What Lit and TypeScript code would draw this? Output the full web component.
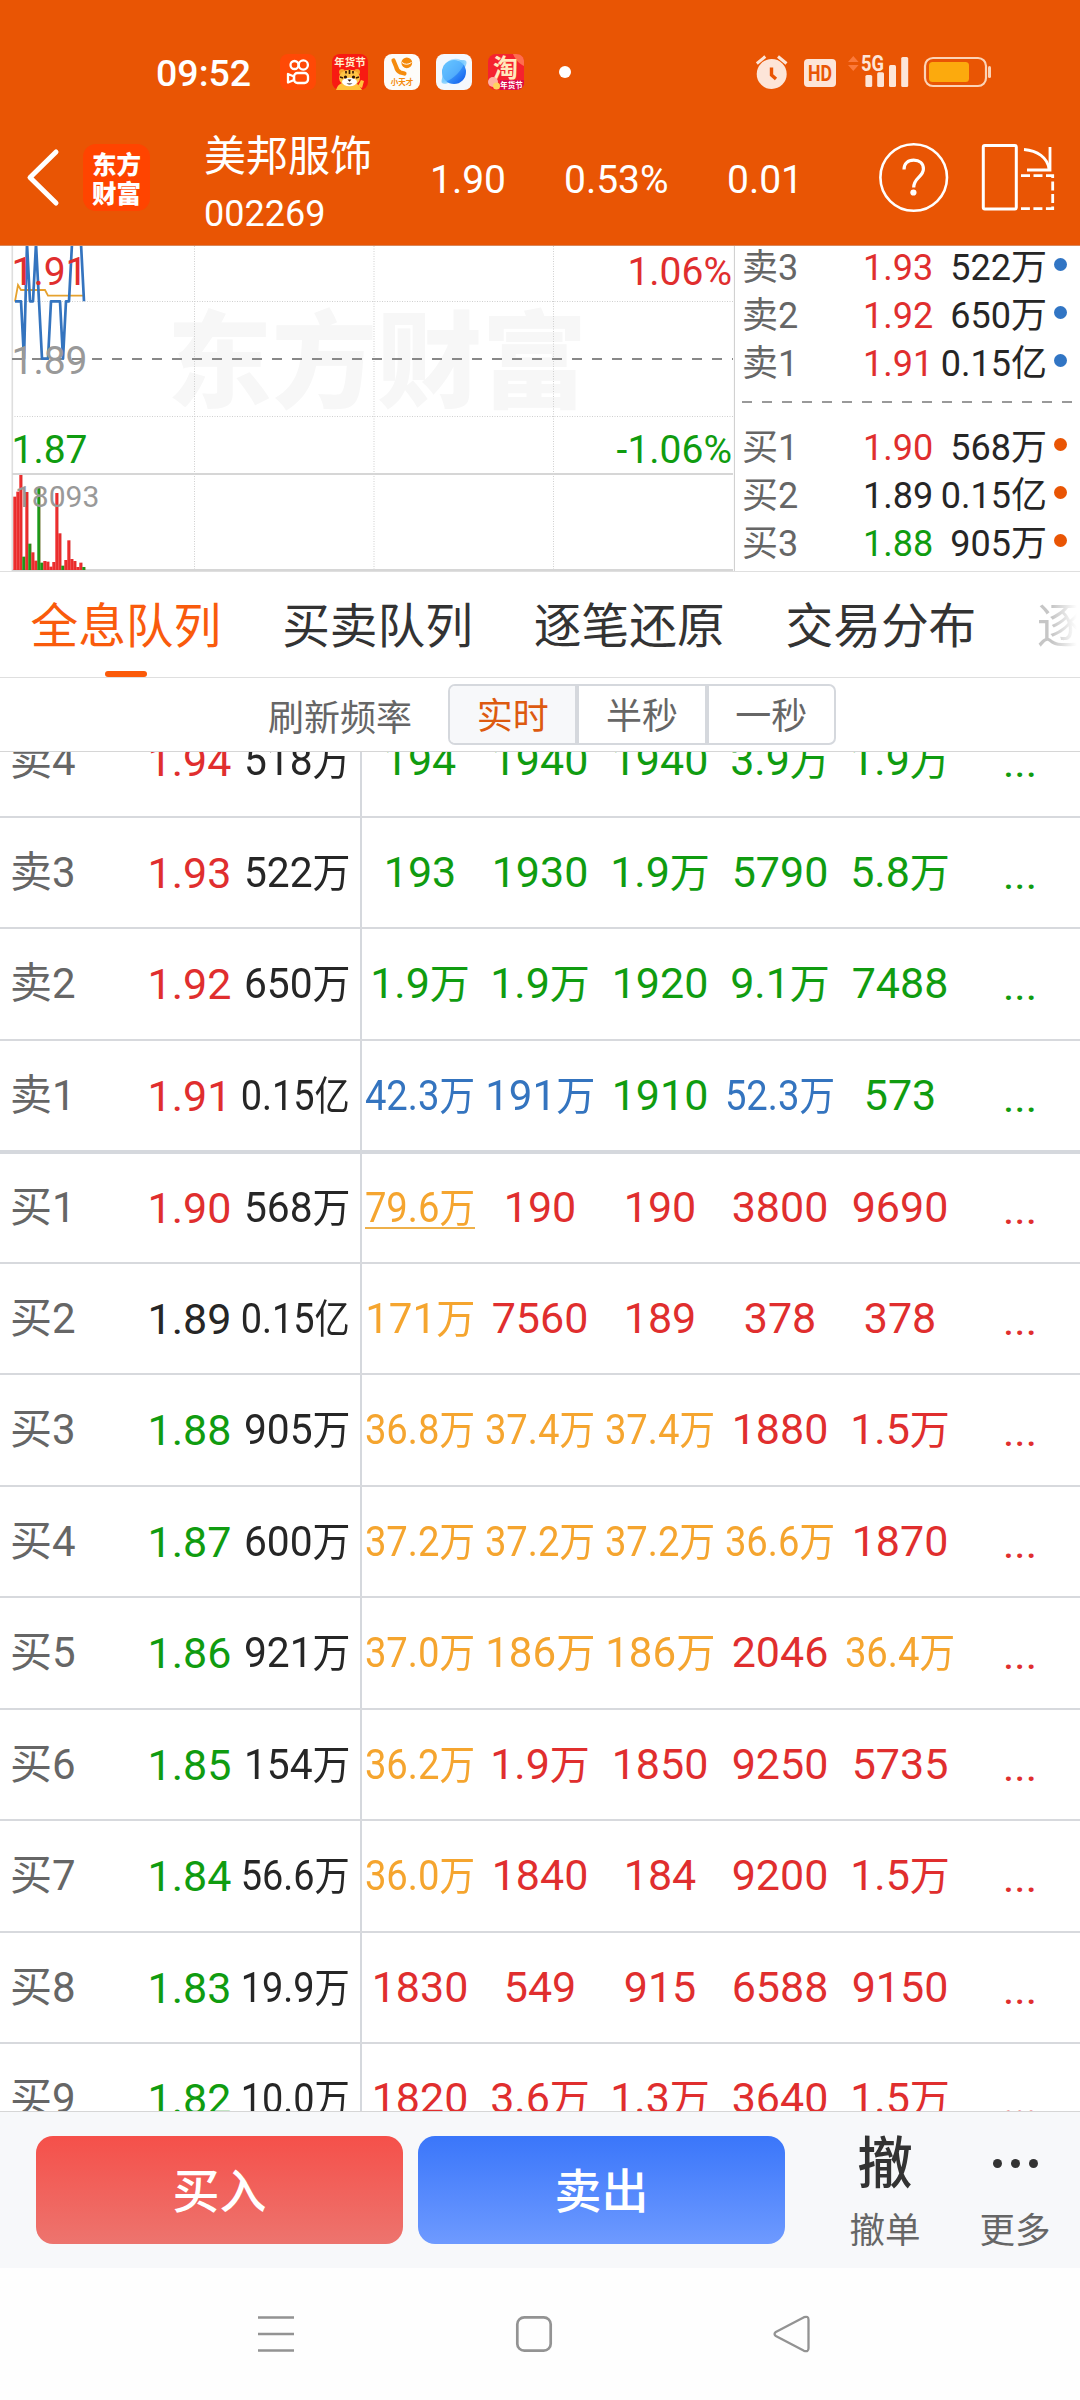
import { LitElement, html, css, svg, nothing } from "lit";
import { customElement, property } from "lit/decorators.js";
import { classMap } from "lit/directives/class-map.js";
import { styleMap } from "lit/directives/style-map.js";

type Tone = "red" | "green" | "blue" | "gold" | "ink";

interface Level {
  label: string;
  price: string;
  tone: Tone;
  qty: string;
  cells: [string, Tone][];
  rest: Tone;
  last?: boolean;
  first?: boolean;
}

const CODE: Record<string, Tone> = { r: "red", g: "green", b: "blue", y: "gold", k: "ink" };

/* Each cell is written as a tone letter followed by its figure. */
const level = (label: string, price: string, qty: string, cells: string, rest: string): Level => ({
  label,
  price: price.slice(1),
  tone: CODE[price[0]],
  qty,
  cells: cells.split(" ").map((c) => [c.slice(1), CODE[c[0]]] as [string, Tone]),
  rest: CODE[rest],
});

const LEVELS: Level[] = [
  level("卖4", "r1.94", "518万", "g194 g1940 g1940 g3.9万 g1.9万", "g"),
  level("卖3", "r1.93", "522万", "g193 g1930 g1.9万 g5790 g5.8万", "g"),
  level("卖2", "r1.92", "650万", "g1.9万 g1.9万 g1920 g9.1万 g7488", "g"),
  { ...level("卖1", "r1.91", "0.15亿", "b42.3万 b191万 g1910 b52.3万 g573", "g"), last: true },
  { ...level("买1", "r1.90", "568万", "y79.6万 r190 r190 r3800 r9690", "r"), first: true },
  level("买2", "k1.89", "0.15亿", "y171万 r7560 r189 r378 r378", "r"),
  level("买3", "g1.88", "905万", "y36.8万 y37.4万 y37.4万 r1880 r1.5万", "r"),
  level("买4", "g1.87", "600万", "y37.2万 y37.2万 y37.2万 y36.6万 r1870", "r"),
  level("买5", "g1.86", "921万", "y37.0万 y186万 y186万 r2046 y36.4万", "r"),
  level("买6", "g1.85", "154万", "y36.2万 r1.9万 r1850 r9250 r5735", "r"),
  level("买7", "g1.84", "56.6万", "y36.0万 r1840 r184 r9200 r1.5万", "r"),
  level("买8", "g1.83", "19.9万", "r1830 r549 r915 r6588 r9150", "r"),
  level("买9", "g1.82", "10.0万", "r1820 r3.6万 r1.3万 r3640 r1.5万", "r"),
];

const FONT = css`Roboto, "Noto Sans CJK SC", sans-serif`;

/* A figure that is squeezed horizontally when it is wider than its column. */
@customElement("fit-figure")
class FitFigure extends LitElement {
  @property() text = "";
  @property({ type: Number }) max = 110;
  @property() origin = "center";

  static styles = css`
    :host { display: flex; justify-content: center; white-space: nowrap; }
    :host(.qty) { justify-content: flex-end; }
    .t { flex: none; }
    .u { font-size: 0.93em; }
  `;

  render() {
    const digits = this.text.replace(/[万亿]/g, "");
    const unit = this.text.slice(digits.length);
    const dots = (digits.match(/\./g) ?? []).length;
    const size = 43;
    const width = (digits.length - dots) * 0.5617 * size + dots * 0.263 * size + unit.length * 0.93 * size;
    const scale = Math.min(1, this.max / width);
    return html`<span class="t" style=${styleMap({
      transform: scale < 1 ? `scaleX(${scale.toFixed(4)})` : "none",
      transformOrigin: this.origin,
    })}>${digits}${unit ? html`<span class="u">${unit}</span>` : nothing}</span>`;
  }
}

@customElement("status-bar")
class StatusBar extends LitElement {
  static styles = css`
    :host { display: flex; align-items: center; height: 98px; padding: 46px 88px 0 156px; box-sizing: border-box;
      color: #fff; font-family: ${FONT}; }
    .time { font-size: 37.5px; line-height: 52px; width: 124px; font-weight: 500; padding-top: 2px; }
    .apps { display: flex; gap: 16px; align-items: center; }
    svg { display: block; }
    .dot { width: 12px; height: 12px; border-radius: 50%; background: #fff; margin-left: 35px; }
    .sys { margin-left: auto; display: flex; align-items: center; }
    .cjk { font-family: "Noto Sans CJK SC", sans-serif; }
    .num { font-family: Roboto, sans-serif; }
  `;

  render() {
    return html`
      <span class="time">09:52</span>
      <div class="apps">
        <svg width="36" height="36" viewBox="0 0 36 36">
          <rect width="36" height="36" rx="8" fill="#ff4906" />
          <g fill="none" stroke="#fff" stroke-width="2.3">
            <circle cx="14.5" cy="11" r="4" /><circle cx="23.3" cy="11" r="4.6" />
            <rect x="14" y="19" width="14" height="10" rx="3.5" />
            <path d="M14 22.5 8 20v8.5l6-2.5z" stroke-linejoin="round" />
          </g>
        </svg>
        <svg width="36" height="36" viewBox="0 0 36 36">
          <rect width="36" height="36" rx="8" fill="#f81a12" />
          <text class="cjk" x="18" y="12" font-size="10.5" font-weight="700" text-anchor="middle" fill="#fff2cf">年货节</text>
          <path d="M4 36c2-7 7-8 13-8s10 2 13 8z" fill="#ffc33b" />
          <circle cx="10" cy="18" r="3" fill="#f6a72a" /><circle cx="25" cy="18" r="3" fill="#f6a72a" />
          <ellipse cx="17.5" cy="24" rx="10.5" ry="8.3" fill="#ffc544" />
          <ellipse cx="17.5" cy="28" rx="7.5" ry="4.2" fill="#fff" />
          <path d="M17.500 16v4M14 17v2.500M21 17v2.500M8 23l3 1M27 23l-3 1" stroke="#3d1c06" stroke-width="1.700" />
          <circle cx="13.500" cy="23" r="1.600" fill="#2b1205" /><circle cx="21.500" cy="23" r="1.600" fill="#2b1205" />
          <path d="M15.500 25.500h4l-2 2.200zM14.500 29.500q3 2 6 0" fill="#2b1205" />
          <path d="M26 32l3-6 3 1-2 7z" fill="#ffc33b" />
        </svg>
        <svg width="36" height="36" viewBox="0 0 36 36">
          <rect width="36" height="36" rx="8" fill="#fdfcf9" />
          <path d="M9.500 6.500l2.500 6q1 4.500 4.500 6l4 1" fill="none" stroke="#f58b0c" stroke-width="4.200" stroke-linecap="round" stroke-linejoin="round" />
          <circle cx="22.800" cy="8.800" r="5.400" fill="#f58b0c" />
          <path d="M18 8.500q4.500 3.500 9.500 0" stroke="#fff" fill="none" />
          <text class="cjk" x="18" y="31" font-size="7.500" font-weight="700" text-anchor="middle" fill="#f58b0c">小天才</text>
        </svg>
        <svg width="36" height="36" viewBox="0 0 36 36">
          <defs><linearGradient id="orb" x1="0" y1="0" x2="1" y2="1">
            <stop offset="0" stop-color="#67c9ff" /><stop offset=".5" stop-color="#3a97fb" /><stop offset="1" stop-color="#0b55ea" />
          </linearGradient></defs>
          <rect width="36" height="36" rx="8" fill="#f4f8fd" />
          <path d="M6 29C4 27 8 18 14 12S28 5 30 7s-2 10-8 16S8 31 6 29z" fill="#8fd3ff" />
          <circle cx="18" cy="18" r="12" fill="url(#orb)" />
          <path d="M6.500 28c7 0 18-9 22-19-3-4-10-6-16-2-7 5-7 13-6 21z" fill="#6cc6ff" opacity=".55" />
        </svg>
        <svg width="36" height="36" viewBox="0 0 36 36">
          <rect width="36" height="36" rx="8" fill="#f5222f" />
          <path d="M25 0h3c5 0 8 3 8 8v4c-4-2-8-5-11-12z" fill="#ff6d4f" />
          <text class="cjk" x="17.500" y="22.500" font-size="25" font-weight="700" text-anchor="middle" fill="#ffe9bd">淘</text>
          <circle cx="5" cy="28" r="5" fill="#ffb2a2" />
          <path d="M12 26h24v2c0 5-3 8-8 8H12z" fill="#dc0b4a" />
          <circle cx="8.500" cy="32" r="3.500" fill="#ffd45e" />
          <text class="cjk" x="23.500" y="34" font-size="7.500" font-weight="700" text-anchor="middle" fill="#fff">年货节</text>
        </svg>
      </div>
      <span class="dot"></span>
      <div class="sys">
        <svg width="236" height="40" viewBox="756 52 236 40" fill="#fde5d8">
          <circle cx="771.700" cy="74" r="15" />
          <path d="M756.800 63.500l8.500-7M786.500 63.500l-8.500-7" stroke="#fde5d8" stroke-width="3" />
          <path d="M771.500 67.500v7.500l4.500 4" stroke="#e95504" stroke-width="3.400" fill="none" />
          <rect x="804" y="59" width="32" height="28" rx="4" />
          <text class="num" x="820" y="81" font-size="22.500" font-weight="700" text-anchor="middle" fill="#e95504" textLength="24" lengthAdjust="spacingAndGlyphs">HD</text>
          <path d="M848 62l5.300-6 5.300 6zM848 65l5.300 6 5.300-6z" fill="#fb7a3c" />
          <text class="num" x="861" y="70.500" font-size="21.500" font-weight="700" textLength="23" lengthAdjust="spacingAndGlyphs">5G</text>
          <rect x="865.400" y="75" width="6.800" height="12" rx="1.500" />
          <rect x="877.200" y="72.300" width="6.800" height="14.700" rx="1.500" />
          <rect x="889" y="65" width="7" height="22" rx="1.500" />
          <rect x="901.200" y="57" width="7" height="30" rx="1.500" />
          <rect x="925" y="58" width="61" height="28" rx="8" fill="none" stroke="#fcd3b6" stroke-width="2.200" />
          <rect x="929" y="62" width="40" height="20" rx="3.500" fill="#fcaa0d" />
          <rect x="988" y="66" width="3" height="12" rx="1.500" fill="#fcd3b6" />
        </svg>
      </div>`;
  }
}

@customElement("stock-header")
class StockHeader extends LitElement {
  static styles = css`
    :host { display: flex; align-items: flex-start; height: 147px; padding: 32px 24px 0 24px; box-sizing: border-box;
      color: #fff; font-family: ${FONT}; }
    svg { display: block; flex: none; }
    .back { margin-top: 17px; }
    .logo { flex: none; margin: 14px 0 0 23px; width: 67px; height: 67px; border-radius: 13px; background: #ff4400;
      display: flex; flex-direction: column; align-items: center; justify-content: center;
      font: 900 24.5px/29px "Noto Sans CJK SC", sans-serif; }
    .id { margin-left: 54px; width: 226px; display: flex; flex-direction: column; }
    .name { font-size: 42px; line-height: 53px; }
    .code { font-size: 36px; line-height: 48px; margin-top: 7px; }
    .n { font-size: 39px; line-height: 46px; margin-top: 27px; white-space: nowrap; }
    .n1 { width: 134px; }
    .n2 { width: 163px; }
    .icons { margin-left: auto; display: flex; padding-top: 12px; }
  `;

  render() {
    return html`
      <svg class="back" width="36" height="60" viewBox="0 0 36 60"><path d="M32 5 6 30.500 32 56" fill="none" stroke="#fff" stroke-width="5" stroke-linecap="round" stroke-linejoin="round" /></svg>
      <div class="logo"><span>东方</span><span>财富</span></div>
      <div class="id"><span class="name">美邦服饰</span><span class="code">002269</span></div>
      <span class="n n1">1.90</span><span class="n n2">0.53%</span><span class="n">0.01</span>
      <div class="icons">
        <svg width="178" height="72" viewBox="878 142 178 72" fill="none" stroke="#fff">
          <circle cx="913.700" cy="177.500" r="33.300" stroke-width="2.600" />
          <path d="M904 169.500c0-6 4-9.300 9.700-9.300s9.700 3.300 9.700 8.800c0 8-9.700 8.500-9.700 18.500" stroke-width="3.200" />
          <circle cx="913.400" cy="192.500" r="3.100" fill="#fff" stroke="none" />
          <rect x="983.300" y="145.500" width="33" height="63.500" rx="1.500" stroke-width="3" />
          <path d="M1024 149.500c13 1 24 8 25 20" stroke-width="2.800" />
          <path d="M1050 147v23h-23" stroke-width="2.800" />
          <path d="M1021 175.600h31.700v33H1021" stroke-width="2.800" stroke-dasharray="9 3.500" />
        </svg>
      </div>`;
  }
}

@customElement("trend-chart")
class TrendChart extends LitElement {
  static styles = css`
    :host { display: block; font-family: ${FONT}; }
    svg { display: block; }
    .wm { font-family: "Noto Sans CJK SC", sans-serif; font-weight: 900; font-size: 105px; fill: #f7f7f7; }
    .v { font-size: 39px; }
    .s { font-size: 30px; fill: #999; }
  `;

  private prices = [184, 184, 184, 356, 11, 184, 184, 11, 184, 356, 356, 356, 184, 184, 184, 184, 356, 184, 184, 11, 11, 11, 11, 184];
  private volumes = "r770 r755 r705 g950 r756 g911 r937 r962 g743 g968 r963 r965 r980 r966 r759 r880 g977 r960 r901 r957 r963 r981 r968 g981".split(" ");

  render() {
    const y = (v: number) => 240 + v / 3;
    const line = this.prices.map((p, i) => `${15 + i * 3},${y(p).toFixed(1)}`).join(" ");
    return html`<svg width="735" height="325" viewBox="0 246 735 325">
      <text class="wm" x="167" y="399">东方财富</text>
      <g stroke="#cfcfcf" stroke-width="1" stroke-dasharray="1 1.500">
        <path d="M12 301.500H733M12 416.500H733M194.500 246V570M374 246V570M553.500 246V570" fill="none" />
      </g>
      <path d="M12.300 246V571" stroke="#dedede" stroke-width="1.600" />
      <path d="M12 474H733M12 570H733" stroke="#d6d6d6" stroke-width="2" />
      <path d="M734.400 246V571" stroke="#cccccc" stroke-width="1" />
      <path d="M12 359H733" stroke="#888" stroke-width="2" stroke-dasharray="10 10" />
      <polyline points="15,301.300 18,285 21,290 45,290 48,295.700 84,295.700" fill="none" stroke="#e6a22e" stroke-width="1.800" />
      <polyline points=${line} fill="none" stroke="#3474bf" stroke-width="2.700" stroke-linejoin="round" />
      ${this.volumes.map((v, i) => {
        const top = y(Number(v.slice(1)));
        return svg`<rect x=${13.3 + i * 3} y=${top} width="3" height=${570 - top} fill=${v[0] === "r" ? "#ee2f2f" : "#199c19"} />
          <path d=${`M${16.1 + i * 3} ${top}V570`} stroke="#b52222" stroke-opacity=".55" stroke-width=".6" />`;
      })}
      <text class="v" x="11.500" y="285" fill="#e02e2e">1.91</text>
      <text class="v" x="11.500" y="374" fill="#999">1.89</text>
      <text class="v" x="11.500" y="462.700" fill="#109c10">1.87</text>
      <text class="s" x="15" y="506.700">18093</text>
      <text class="v" x="732" y="285" text-anchor="end" fill="#e02e2e">1.06%</text>
      <text class="v" x="732" y="462.700" text-anchor="end" fill="#109c10">-1.06%</text>
    </svg>`;
  }
}

@customElement("mini-book")
class MiniBook extends LitElement {
  static styles = css`
    :host { display: flex; flex-direction: column; flex: 1; font-family: ${FONT}; font-size: 36px; color: #262626; }
    .row { display: grid; grid-template-columns: 121px 1fr 7px 13px; align-items: center; height: 48px; line-height: 48px;
      padding: 0 13px 0 7px; white-space: nowrap; }
    .label { color: #666; }
    .pq { display: flex; justify-content: space-between; }
    .dot { width: 13px; height: 13px; border-radius: 50%; grid-column: 4; margin-top: -7px; }
    .asks .dot { background: #3175c4; }
    .bids .dot { background: #e95504; }
    .asks { margin-top: -2px; }
    .bids { margin-top: 21px; }
    svg { display: block; flex: none; margin: 13px 0 0 7px; }
    .red { color: #e02e2e; } .green { color: #109c10; }
  `;

  render() {
    const row = ([label, price, tone, qty]: string[]) => html`<div class="row">
      <span class="label">${label}</span>
      <span class="pq"><span class=${tone}>${price}</span><span>${qty}</span></span>
      <span class="dot"></span></div>`;
    return html`
      <div class="asks">${[["卖3", "1.93", "red", "522万"], ["卖2", "1.92", "red", "650万"], ["卖1", "1.91", "red", "0.15亿"]].map(row)}</div>
      <svg width="338" height="2" viewBox="0 0 338 2"><path d="M0 1H331" stroke="#999" stroke-width="2" stroke-dasharray="10 10" /></svg>
      <div class="bids">${[["买1", "1.90", "red", "568万"], ["买2", "1.89", "ink", "0.15亿"], ["买3", "1.88", "green", "905万"]].map(row)}</div>`;
  }
}

@customElement("order-row")
class OrderRow extends LitElement {
  @property({ attribute: false }) level!: Level;

  static styles = css`
    :host { display: block; }
    .row { display: flex; height: 109.5px; border-bottom: 2px solid #d7d9dd; font: 43px/108px ${FONT}; color: #262626; white-space: nowrap; }
    .last { border-bottom: 4px solid #d5d8dd; }
    .first { height: 107.5px; line-height: 106px; }
    .left { display: grid; grid-template-columns: 137.5px 84px minmax(0, 1fr); width: 362px; flex: none; box-sizing: border-box;
      padding: 0 10px 0 10px; border-right: 2px solid #d5d8dd; margin-right: -2px; }
    .label { color: #666; font-size: 42px; padding-top: 1px; }
    .price { padding-top: 1px; }
    .cell { width: 120px; text-align: center; position: relative; }
    .rest { padding-top: 2px; box-sizing: border-box; }
    .mark::after { content: ""; position: absolute; left: 5px; right: 5px; top: 73px; height: 2px; background: #eeb04a; }
    .red { color: #e02e2e; } .green { color: #109c10; } .blue { color: #3474bf; } .gold { color: #f5a52f; }
  `;

  render() {
    const l = this.level;
    return html`<div class=${classMap({ row: true, last: !!l.last, first: !!l.first })}>
      <div class="left">
        <span class="label">${l.label}</span><span class=${classMap({ price: true, [l.tone]: true })}>${l.price}</span>
        <fit-figure class="qty" .text=${l.qty} .max=${l.qty.length > 4 ? 109 : 106.5} .origin=${"right"}></fit-figure>
      </div>
      ${l.cells.map(([t, tone], i) => html`<div class=${classMap({ cell: true, [tone]: true, mark: !!l.first && i === 0 })}>
        <fit-figure .text=${t} .max=${110}></fit-figure></div>`)}
      <div class=${classMap({ cell: true, rest: true, [l.rest]: true })}>...</div>
    </div>`;
  }
}

@customElement("app-root")
class AppRoot extends LitElement {
  static styles = css`
    :host { display: block; width: 1080px; height: 2400px; overflow: hidden; background: #fff; font-family: ${FONT}; color: #262626; }
    .page { display: flex; flex-direction: column; height: 2400px; }
    .top { background: #e95504; height: 245px; border-bottom: 1px solid #d9875a; flex: none; }
    .quote { display: flex; height: 325px; border-bottom: 1px solid #dfdfdf; flex: none; }
    .tabs { display: flex; flex: none; height: 105px; border-bottom: 1px solid #dfdfdf; padding-left: 30px; gap: 60px; overflow: hidden;
      font-size: 47.700px; line-height: 111px; color: #333; white-space: nowrap; }
    .tab { flex: none; display: flex; flex-direction: column; align-items: center; width: 191.700px; height: 105px; }
    .tab.on { color: #f95b0c; }
    .tab.on::after { content: ""; width: 42px; height: 6px; border-radius: 3px; background: #fb5a09; margin-top: -12px; flex: none; }
    .tab.fade { display: block; width: 48px; background: linear-gradient(90deg, #c6c6c6 0, #c6c6c6 15px, #fff 40px); -webkit-background-clip: text; background-clip: text; color: transparent; }
    .rate { display: flex; flex: none; align-items: center; height: 73px; padding-left: 268px; gap: 36px; border-bottom: 1px solid #d6d6d6; font-size: 36px; color: #666; }
    .seg { display: flex; box-sizing: border-box; width: 388px; height: 61px; border: 2px solid #d5d8dd; border-radius: 7px; overflow: hidden; line-height: 62px; }
    .opt { flex: 1; text-align: center; }
    .opt + .opt { border-left: 4px solid #d5d8dd; }
    .opt.on { background: #f7f8fa; color: #dd5a10; }
    .book { flex: none; height: 1359px; overflow: hidden; }
    .rows { margin-top: -46px; }
    .bar { flex: none; display: flex; height: 157px; box-sizing: border-box; border-top: 1px solid #d6d6d6; background: #f7f8fa; padding: 24px 0 0 36px; }
    .btn { width: 367px; height: 108px; border-radius: 17px; margin-right: 15px; color: #fff; font-size: 47px; font-weight: 500; line-height: 112px; text-align: center; }
    .buy { background: linear-gradient(#f5504a, #ed746e); }
    .sell { background: linear-gradient(#3a76fa, #6e9aff); }
    .act { width: 130px; display: flex; flex-direction: column; align-items: center; font-size: 35.5px; line-height: 46px; color: #666; }
    .act:nth-of-type(3) { margin-left: 20px; }
    .big { height: 72px; font-size: 55.500px; line-height: 57px; color: #333; font-weight: 500; }
    .dots { height: 72px; display: flex; gap: 9px; padding-top: 23px; box-sizing: border-box; }
    .dots i { width: 9px; height: 9px; border-radius: 50%; background: #333; }
    .nav { flex: 1; display: flex; align-items: center; gap: 220px; padding-left: 257px; background: #fefefe; }
    .nav svg { display: block; width: 38px; height: 38px; fill: none; stroke: #939393; stroke-width: 2.700; }
  `;

  render() {
    return html`<div class="page">
      <div class="top"><status-bar></status-bar><stock-header></stock-header></div>
      <div class="quote"><trend-chart></trend-chart><mini-book></mini-book></div>
      <div class="tabs">
        <span class="tab on">全息队列</span><span class="tab">买卖队列</span><span class="tab">逐笔还原</span><span class="tab">交易分布</span>
        <span class="tab fade">逐</span>
      </div>
      <div class="rate">
        <span>刷新频率</span>
        <div class="seg"><span class="opt on">实时</span><span class="opt">半秒</span><span class="opt">一秒</span></div>
      </div>
      <div class="book"><div class="rows">${LEVELS.map((l) => html`<order-row .level=${l}></order-row>`)}</div></div>
      <div class="bar">
        <div class="btn buy">买入</div><div class="btn sell">卖出</div>
        <div class="act"><span class="big">撤</span><span>撤单</span></div>
        <div class="act"><span class="dots"><i></i><i></i><i></i></span><span>更多</span></div>
      </div>
      <div class="nav">
        <svg viewBox="0 0 38 38"><path d="M1 2.500h36M1 19h36M1 35.500h36" /></svg>
        <svg viewBox="0 0 38 38"><rect x="2.300" y="2.300" width="33.400" height="33.400" rx="7" /></svg>
        <svg viewBox="0 0 38 38"><path d="M2.800 17 31 2.200q4.500-1.500 4.500 2.500v28.600q0 4-4.500 2.500L2.800 21q-2.500-2 0-4z" stroke-linejoin="round" stroke-width="2.300" /></svg>
      </div>
    </div>`;
  }
}
